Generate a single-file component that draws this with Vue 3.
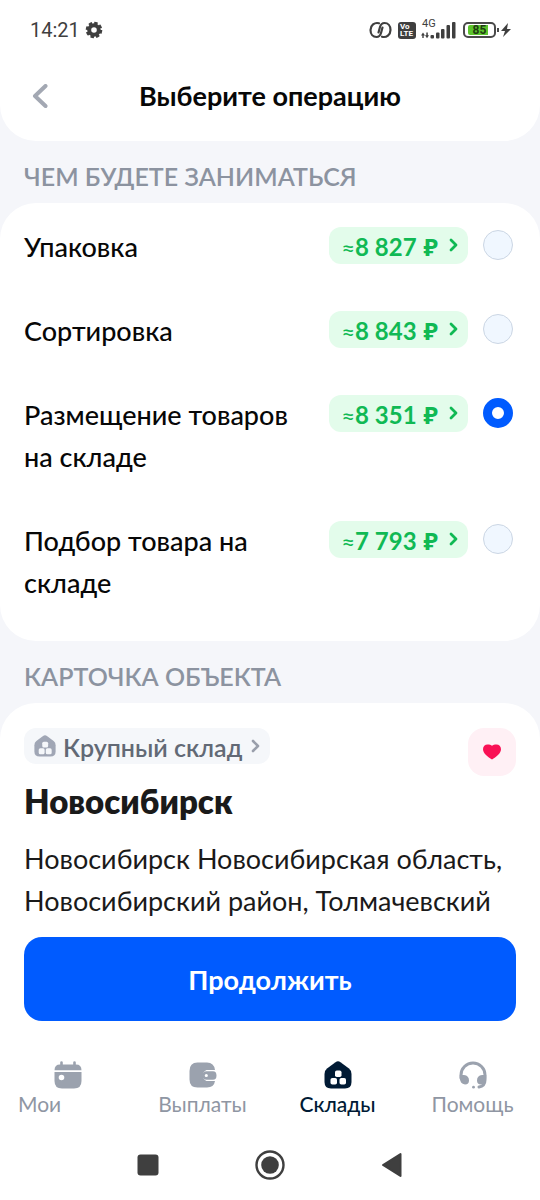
<script setup>
import { ref } from 'vue'

const selected = ref('placement')
const operations = [
  { id: 'packing', name: 'Упаковка', price: '8 827' },
  { id: 'sorting', name: 'Сортировка', price: '8 843' },
  { id: 'placement', name: 'Размещение товаров на складе', price: '8 351' },
  { id: 'picking', name: 'Подбор товара на складе', price: '7 793' }
]
</script>

<template>
  <div class="screen">
    <header class="top">
      <div class="status">
        <span class="time">14:21</span>
        <svg class="gear" width="18" height="18" viewBox="0 0 18 18" aria-hidden="true">
          <g fill="none" stroke="#3f3f3f">
            <circle cx="9" cy="9" r="4.8" stroke-width="4" />
            <circle cx="9" cy="9" r="7" stroke-width="2.6" stroke-dasharray="3.4 2.1" />
          </g>
        </svg>
        <div class="indicators">
          <svg width="24" height="18" viewBox="0 0 24 18" aria-hidden="true">
            <g fill="none" stroke="#3f3f3f" stroke-width="2.2" stroke-linecap="round">
              <path d="M10 2.300C5.500 1 1.500 4.500 1.500 9C1.500 13 4 16 7.500 16C10 16 11.300 14.500 12 12L13.500 6.500" />
              <path d="M14 15.700C18.500 17 22.500 13.500 22.500 9C22.500 5 20 2 16.500 2C14 2 12.700 3.500 12 6L10.500 11.500" transform="translate(-1 0)" />
            </g>
          </svg>
          <span class="volte"><span>Vo</span><span>LTE</span></span>
          <span class="network">
            <span class="generation">4G</span>
            <svg width="35" height="18" viewBox="0 0 35 18" fill="#3f3f3f" aria-hidden="true">
              <path d="M1.300 17v-2.500H0l2-3 2 3H2.700V17zM5.300 11.500h1.500v2.700H8l-2 3-2-3h1.300z" />
              <rect x="9.500" y="14" width="3.500" height="3.500" rx="1" />
              <rect x="15" y="11.500" width="3.500" height="6" rx="1" />
              <rect x="20" y="8" width="3.500" height="9.500" rx="1" />
              <rect x="25.500" y="4" width="3.500" height="13.500" rx="1" />
              <rect x="31" y="1" width="3.500" height="16.500" rx="1" />
            </svg>
          </span>
          <span class="battery"><span class="charge">85</span></span>
          <svg class="bolt" width="10" height="14" viewBox="0 0 10 14" aria-hidden="true">
            <path d="M7 0L0 8h4l-2 6 8-8H6z" fill="#3f3f3f" />
          </svg>
        </div>
      </div>
      <div class="bar">
        <button class="back" type="button" aria-label="Назад">
          <svg width="16" height="24" viewBox="0 0 16 24" aria-hidden="true">
            <path d="M13.500 2L3 12l10.500 10" fill="none" stroke="#a3a8b3" stroke-width="4" stroke-linecap="round" stroke-linejoin="round" />
          </svg>
        </button>
        <h1>Выберите операцию</h1>
      </div>
    </header>

    <main>
      <h2>ЧЕМ БУДЕТЕ ЗАНИМАТЬСЯ</h2>
      <section class="card operations">
        <div v-for="op in operations" :key="op.id" class="operation">
          <label :for="op.id">{{ op.name }}</label>
          <button class="price" type="button">
            <span><span class="approx">≈</span>{{ op.price }}</span>
            <span>₽</span>
            <svg width="10" height="14" viewBox="0 0 10 14" aria-hidden="true">
              <path d="M2 2l5 5-5 5" fill="none" stroke="currentColor" stroke-width="2.8" stroke-linecap="round" stroke-linejoin="round" />
            </svg>
          </button>
          <input :id="op.id" v-model="selected" type="radio" name="operation" :value="op.id">
        </div>
      </section>

      <h2>КАРТОЧКА ОБЪЕКТА</h2>
      <section class="card place">
        <div class="place-head">
          <button class="kind" type="button">
            <svg width="22" height="22" viewBox="0 0 28 28" aria-hidden="true">
              <path d="M11.500 1.200Q14-.6 16.500 1.200L25 7.500Q27.500 9.500 27.500 13v8q0 6.500-6.500 6.500H7Q.5 27.500.5 21v-8Q.5 9.500 3 7.500z" fill="#a0a6b5" />
              <g fill="#f5f7fa"><rect x="10.500" y="8.500" width="7.500" height="7.500" rx="2" /><rect x="6" y="17" width="7.500" height="7.500" rx="2" /><rect x="15" y="17" width="7.500" height="7.500" rx="2" /></g>
            </svg>
            Крупный склад
            <svg class="kind-arrow" width="10" height="14" viewBox="0 0 10 14" aria-hidden="true">
              <path d="M2 2l5 5-5 5" fill="none" stroke="#9a9fab" stroke-width="2.6" stroke-linecap="round" stroke-linejoin="round" />
            </svg>
          </button>
          <button class="favourite" type="button" aria-label="Избранное">
            <svg width="20" height="18" viewBox="0 0 20 18" aria-hidden="true">
              <path d="M10 16.500C6 14 1 10.500 1 6.200C1 3.300 3 1.500 5.500 1.500C7.500 1.500 9 1.900 10 2.700C11 1.900 12.500 1.500 14.500 1.500C17 1.500 19 3.300 19 6.200C19 10.500 14 14 10 16.500Z" fill="#f91155" />
            </svg>
          </button>
        </div>
        <h3>Новосибирск</h3>
        <p>Новосибирск Новосибирская область, Новосибирский район, Толмачевский</p>
      </section>
    </main>

    <footer>
      <button class="continue" type="button">Продолжить</button>
      <nav class="tabs">
        <a href="#my" class="my">
          <svg width="28" height="28" viewBox="0 0 28 28" aria-hidden="true">
            <path d="M7.500 1.500v5M20.500 1.500v5" stroke="#9ba2ae" stroke-width="2.600" stroke-linecap="round" />
            <path d="M.5 9.300Q.5 3.500 6 3.500h16q5.500 0 5.500 5.800z" fill="#9ba2ae" />
            <path fill-rule="evenodd" d="M.5 11h27v9q0 7.500-7.500 7.500H8Q.5 27.500.5 20zM7.500 13.700a2.800 2.800 0 1 0 0 5.600a2.800 2.800 0 0 0 0-5.600z" fill="#9ba2ae" />
          </svg>
          <span>Мои</span>
        </a>
        <a href="#payments">
          <svg width="28" height="28" viewBox="0 0 28 28" aria-hidden="true">
            <path d="M8.500 1.500h9.500q7 0 8 7.500H17.500a6 6 0 0 0 0 11h8.500q-1 6.500-8 6.500H8.500Q.5 26.500.5 18.500V10Q.5 1.500 8.500 1.500z" fill="#9ba2ae" />
            <path fill-rule="evenodd" d="M17.500 10.200h6.500q3.500 0 3.500 4.300T24 18.800h-6.500a4.300 4.300 0 0 1 0-8.600zM17.300 12.900a1.600 1.600 0 1 0 0 3.200a1.600 1.600 0 0 0 0-3.200z" fill="#9ba2ae" />
          </svg>
          <span>Выплаты</span>
        </a>
        <a href="#warehouses" class="active" aria-current="page">
          <svg width="28" height="28" viewBox="0 0 28 28" aria-hidden="true">
            <path d="M11.500 1.200Q14-.6 16.500 1.200L25 7.500Q27.500 9.500 27.500 13v8q0 6.500-6.500 6.500H7Q.5 27.500.5 21v-8Q.5 9.500 3 7.500z" fill="#001a34" />
            <g fill="#fff"><rect x="11" y="9.500" width="6.500" height="6.500" rx="1.800" /><rect x="6.500" y="17" width="6.500" height="6.500" rx="1.800" /><rect x="15.500" y="17" width="6.500" height="6.500" rx="1.800" /></g>
          </svg>
          <span>Склады</span>
        </a>
        <a href="#help">
          <svg width="28" height="28" viewBox="0 0 28 28" aria-hidden="true">
            <path d="M2 17v-3a12 12 0 0 1 24 0v5q0 6-6 7" fill="none" stroke="#9ba2ae" stroke-width="3" stroke-linecap="round" />
            <path d="M.8 14h4.200q5 .5 5 5.500 0 4-4 4Q.8 22.500.8 17zM27.200 14h-4.200q-5 .5-5 5.500 0 4 4 4Q27.200 22.500 27.200 17z" fill="#9ba2ae" />
            <circle cx="14.500" cy="26.200" r="1.400" fill="#9ba2ae" />
          </svg>
          <span>Помощь</span>
        </a>
      </nav>
      <div class="system">
        <button type="button" aria-label="Недавние">
          <svg width="22" height="22" viewBox="0 0 22 22" aria-hidden="true"><rect x="0.500" y="0.500" width="21" height="21" rx="3" fill="#3f3f3f" /></svg>
        </button>
        <button type="button" aria-label="Домой">
          <svg width="30" height="30" viewBox="0 0 30 30" aria-hidden="true">
            <circle cx="15" cy="15" r="13.500" fill="none" stroke="#3f3f3f" stroke-width="2.400" />
            <circle cx="15" cy="15" r="8.800" fill="#3f3f3f" />
          </svg>
        </button>
        <button type="button" aria-label="Назад в системе">
          <svg width="22" height="26" viewBox="0 0 22 26" aria-hidden="true">
            <path d="M19.500 2v22L2 13z" fill="#3f3f3f" stroke="#3f3f3f" stroke-width="2" stroke-linejoin="round" />
          </svg>
        </button>
      </div>
    </footer>
  </div>
</template>

<style>
body {
  margin: 0;
  background: #fff;
}
</style>

<style scoped>
* {
  box-sizing: border-box;
}
.screen {
  min-height: 100vh;
  display: flex;
  flex-direction: column;
  background: #f5f6fa;
  color: #070707;
  font-family: Lato, "Noto Sans", sans-serif;
}
button {
  padding: 0;
  border: 0;
  background: none;
  color: inherit;
  font: inherit;
}
svg {
  display: block;
  flex: none;
}
h1, h2, h3, p {
  margin: 0;
}
.top {
  background: #fff;
  border-radius: 0 0 36px 36px;
  padding-bottom: 16px;
}
.status {
  display: flex;
  align-items: center;
  height: 60px;
  padding: 0 29px 0 30px;
  gap: 5px;
  font-family: Roboto, sans-serif;
  color: #3f3f3f;
}
.time {
  font-size: 20px;
}
.indicators {
  display: flex;
  align-items: center;
  gap: 5px;
  margin-left: auto;
}
.volte {
  display: flex;
  flex-direction: column;
  width: 18px;
  height: 17px;
  padding: 1px 2px;
  border-radius: 3px;
  background: #3f3f3f;
  color: #fff;
  font-size: 8px;
  font-weight: 700;
  line-height: 7px;
}
.network {
  position: relative;
}
.generation {
  position: absolute;
  left: 1px;
  top: -3px;
  font-size: 11px;
  line-height: 12px;
}
.battery {
  position: relative;
  width: 33px;
  height: 16px;
  margin-left: 2px;
  padding: 1px 3px;
  border: 2px solid #4a4a4a;
  border-radius: 5px;
}
.battery::after {
  content: "";
  position: absolute;
  right: -5px;
  top: 4px;
  width: 2px;
  height: 4px;
  background: #4a4a4a;
}
.charge {
  display: block;
  border-radius: 2px;
  background: linear-gradient(to right, #5cc42c 88%, #fff 88%);
  color: #1f3d12;
  font-size: 12px;
  font-weight: 700;
  line-height: 10px;
  text-align: center;
}
.bar {
  display: grid;
  grid-template-columns: 32px 1fr 32px;
  align-items: center;
  height: 65px;
  padding: 6px 24px 0;
}
.back {
  display: grid;
  place-items: center;
  height: 48px;
}
h1 {
  font-size: 27px;
  font-weight: 700;
  line-height: 36px;
  text-align: center;
}
h2 {
  padding: 14px 24px 6px;
  color: #8c93a0;
  font-size: 25px;
  font-weight: 600;
  line-height: 42px;
}
.card {
  background: #fff;
  border-radius: 36px;
}
.operations {
  padding: 2px 27px 16px 24px;
}
.operation {
  display: flex;
  align-items: flex-start;
  padding: 21px 0;
}
.operation label {
  flex: 1;
  padding-right: 24px;
  font-size: 27px;
  font-weight: 500;
  line-height: 42px;
}
.price {
  display: flex;
  align-items: center;
  gap: 7px;
  height: 37px;
  margin: 1px 15px 0 0;
  padding: 2px 9px 0 12px;
  border-radius: 12px;
  background: #e3fceb;
  color: #10b954;
  font-size: 24px;
  font-weight: 700;
  line-height: 34px;
  white-space: nowrap;
}
.approx {
  font-weight: 400;
}
.price svg {
  margin: 0 0 4px 4px;
}
input {
  appearance: none;
  width: 30px;
  height: 30px;
  margin: 4px 0 0;
  border: 1px solid #cbd6e4;
  border-radius: 50%;
  background: #f0f7ff;
}
input:checked {
  border: 9px solid #005bff;
  background: #fff;
}
.place {
  padding: 25px 24px 15px;
  border-radius: 36px 36px 0 0;
}
.place-head {
  display: flex;
  align-items: flex-start;
  justify-content: space-between;
  height: 48px;
}
.kind {
  display: flex;
  align-items: center;
  gap: 7px;
  height: 36px;
  padding: 2px 9px 0 10px;
  border-radius: 12px;
  background: #f5f7fa;
  color: #626975;
  font-size: 25px;
  font-weight: 600;
  line-height: 34px;
}
.kind svg {
  margin-bottom: 2px;
}
.kind .kind-arrow {
  margin-left: 2px;
}
.favourite {
  display: grid;
  place-items: center;
  width: 48px;
  height: 48px;
  border-radius: 16px;
  background: #fff0f5;
}
h3 {
  margin-top: 4px;
  color: #1a1a1a;
  font-size: 33px;
  font-weight: 800;
  line-height: 42px;
}
.place p {
  margin-top: 16px;
  color: #1a1a1a;
  font-size: 27px;
  line-height: 42px;
}
footer {
  flex: 1;
  background: #fff;
}
.continue {
  display: block;
  width: calc(100% - 48px);
  height: 84px;
  margin: 0 24px;
  border-radius: 18px;
  background: #005bff;
  color: #fff;
  font-size: 27px;
  font-weight: 700;
}
.tabs {
  display: grid;
  grid-template-columns: repeat(4, 1fr);
  padding-top: 40px;
}
.tabs a {
  display: flex;
  flex-direction: column;
  align-items: center;
  gap: 1px;
  color: #8f96a3;
  font-size: 21px;
  line-height: 28px;
  text-decoration: none;
}
.tabs .my span {
  align-self: stretch;
  padding-left: 18px;
}
.tabs .active {
  color: #001a34;
  font-weight: 500;
}
.system {
  display: flex;
  justify-content: center;
  align-items: center;
  gap: 96px;
  padding-top: 32px;
}
</style>
